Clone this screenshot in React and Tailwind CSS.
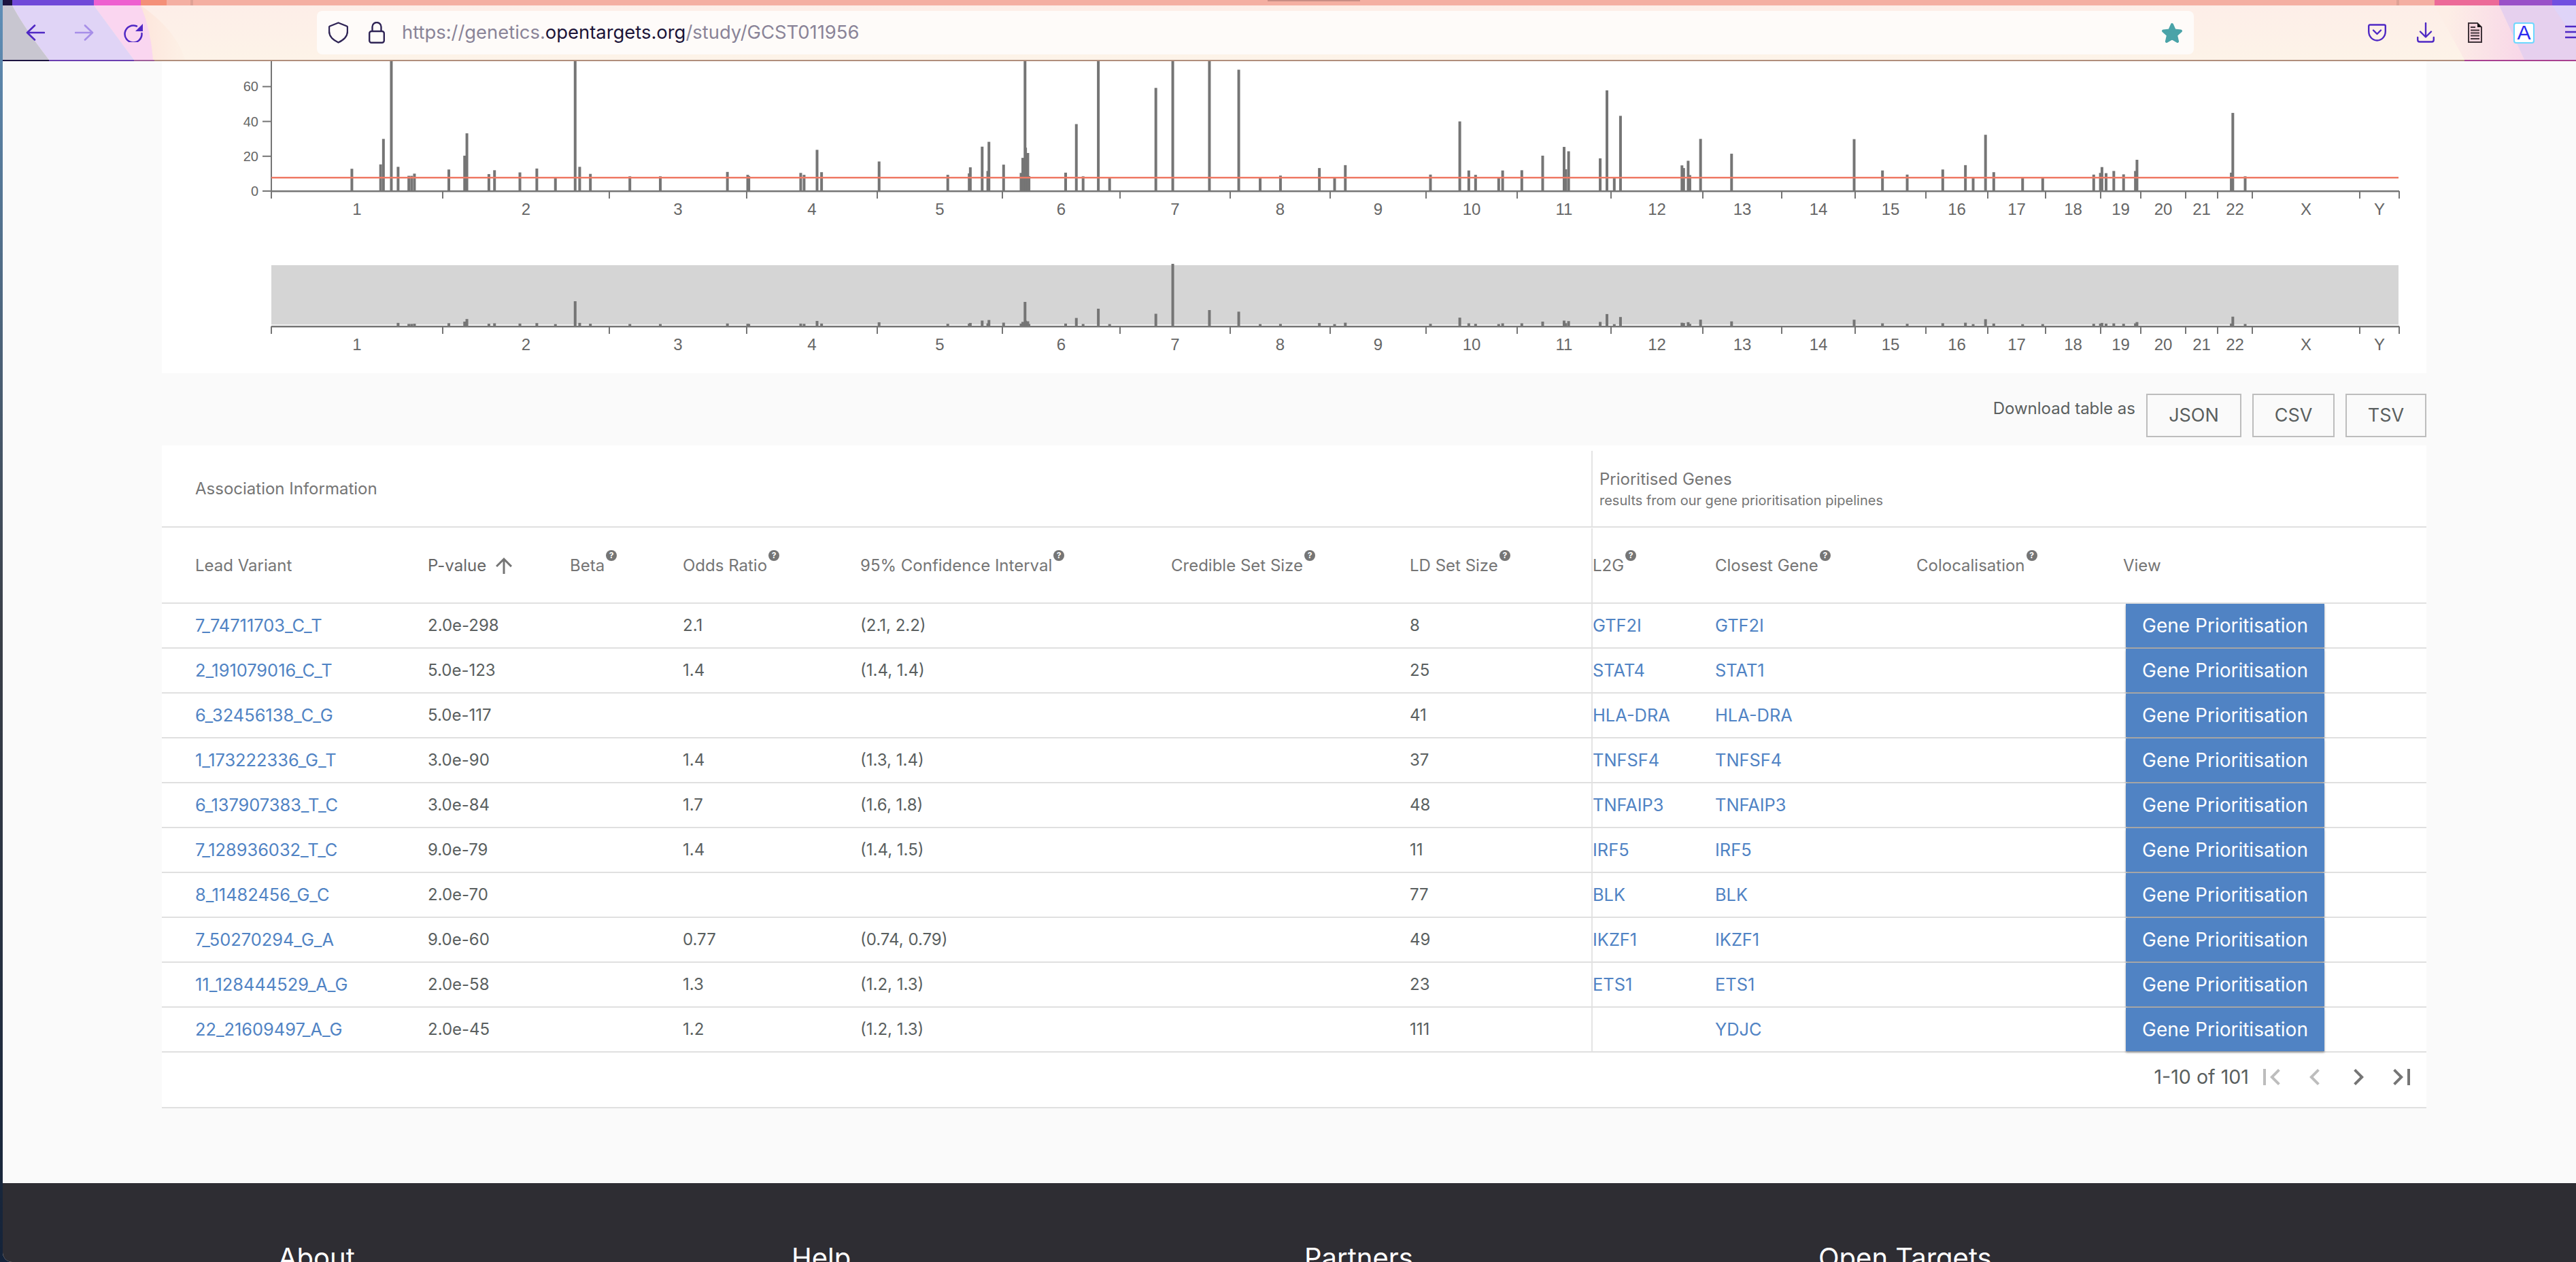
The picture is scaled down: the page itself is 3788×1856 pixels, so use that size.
import React from "react";

const z1 = [[624,695],[675,677],[680,572],[694,252],[706,687],[725,724],[730,724],[735,715],[796,698],[824,641],[828,549],[867,717],[877,701],[922,710],[952,694],[985,730],[1020,252,36],[1028,687],[1047,716],[1117,726],[1171,726],[1290,708],[1326,720],[1328,725],[1420,712],[1426,720],[1449,617],[1457,709],[1559,665]];
const z2 = [[113,720],[151,714],[153,689],[174,604],[184,704],[186,584],[212,678],[243,712],[246,650],[250,252,35],[251,608],[255,630],[257,725],[322,711],[341,511],[353,726],[380,252,25],[400,729],[482,362],[512,252,91],[577,252,23],[629,287],[667,729],[703,723],[772,692],[799,731],[818,680],[969,719],[1021,500],[1037,702],[1049,720],[1090,729],[1097,702],[1131,701],[1168,641],[1206,605],[1209,697],[1214,623],[1270,652],[1282,372],[1295,732],[1306,477],[1415,681],[1418,692],[1426,662],[1429,721],[1448,572],[1503,633]];
const z3 = [[167,573],[222,702],[270,719],[339,698],[383,680],[398,731],[422,555],[438,709],[494,732],[533,729],[632,719],[645,712],[648,688],[656,713],[671,704],[690,718],[713,704],[716,658],[899,711],[902,465],[926,726]];

const bars = [
  ...z1.map(([x, y, m], i) => ({ x: x / 1.206, top: Math.max(90, y / 2.8), m, skipMini: i < 4 })),
  ...z2.map(([x, y, m]) => ({ x: 1300 + x / 1.206, top: Math.max(90, y / 2.8), m })),
  ...z3.map(([x, y, m]) => ({ x: 2600 + x / 1.32, top: Math.max(90, y / 2.8), m })),
];

const ticks = [399,651,896,1098,1290,1474,1647,1809,1956,2097,2231,2369,2504,2620,2728,2832,2923,3008,3089,3148,3214,3261,3312,3470,3528];
const chromLabels = ["1","2","3","4","5","6","7","8","9","10","11","12","13","14","15","16","17","18","19","20","21","22","X","Y"];
const AXIS = "#757575";

function Axis({ base, tickEnd, labelY }) {
  return (
    <g>
      <rect x={399} y={base - 1} width={3129} height={2.5} fill={AXIS} />
      {ticks.map((t) => <rect key={t} x={t - 1} y={base} width={2} height={tickEnd - base} fill={AXIS} />)}
      {chromLabels.map((l, i) => (
        <text key={l} x={(ticks[i] + ticks[i + 1]) / 2} y={labelY} textAnchor="middle" dominantBaseline="central" fontSize="24" fontFamily="'Liberation Sans', sans-serif" fill="#666">{l}</text>
      ))}
    </g>
  );
}

function Chart() {
  return (
    <svg width="3330" height="459" viewBox="238 90 3330 459" className="block">
      <rect x={398} y={90} width={2} height={202} fill={AXIS} />
      {[0, 20, 40, 60].map((v) => {
        const y = 281 - v * 2.56;
        return (
          <g key={v}>
            <rect x={386} y={y - 1} width={13} height={2} fill={AXIS} />
            <text x={380} y={y} textAnchor="end" dominantBaseline="central" fontSize="20" fontFamily="'Liberation Sans', sans-serif" fill="#666">{v}</text>
          </g>
        );
      })}
      {bars.map((b, i) => <rect key={i} x={b.x - 2} y={b.top} width={4} height={281 - b.top} fill={AXIS} />)}
      <rect x={399} y={260} width={3128} height={2.5} fill="#ef7a65" />
      <Axis base={281} tickEnd={292} labelY={307} />
      <rect x={399} y={390} width={3128} height={87.5} fill="#d5d5d5" />
      {bars.filter((b) => !b.skipMini).map((b, i) => {
        const v = (281 - b.top) / 2.56;
        const h = b.m || Math.max(1.5, v * 0.296);
        return <rect key={i} x={b.x - 2} y={479 - h} width={4} height={h} fill={AXIS} />;
      })}
      <Axis base={480} tickEnd={491} labelY={506} />
    </svg>
  );
}

function ChromeBackdrop() {
  return (
    <svg className="absolute inset-0" width="3784" height="90" viewBox="4 0 3784 90">
      <defs>
        <linearGradient id="barbg" x1="0" y1="0" x2="0" y2="1">
          <stop offset="0" stopColor="#fdeee8" />
          <stop offset="1" stopColor="#fdf3e8" />
        </linearGradient>
        <linearGradient id="rpink" gradientUnits="userSpaceOnUse" x1="3600" y1="0" x2="3712" y2="0">
          <stop offset="0" stopColor="#fdeee6" />
          <stop offset="1" stopColor="#f8d6e8" />
        </linearGradient>
        <linearGradient id="lpeach" gradientUnits="userSpaceOnUse" x1="210" y1="0" x2="272" y2="0">
          <stop offset="0" stopColor="#fde6dc" />
          <stop offset="1" stopColor="#fdf1e6" />
        </linearGradient>
      </defs>
      <rect x="4" y="0" width="3784" height="8" fill="#f4afa2" />
      <rect x="4" y="0" width="14" height="8" fill="#1c1440" />
      <rect x="18" y="0" width="120" height="8" fill="#7048d8" />
      <rect x="138" y="0" width="69" height="8" fill="#ee5fd0" />
      <rect x="207" y="0" width="38" height="8" fill="#f49078" />
      <rect x="280" y="0" width="4" height="8" fill="#dfa195" />
      <rect x="1864" y="0" width="136" height="2" fill="#c98d84" />
      <rect x="3524" y="0" width="4" height="8" fill="#dfa195" />
      <rect x="3580" y="0" width="95" height="8" fill="#ec6a98" />
      <rect x="3675" y="0" width="78" height="8" fill="#9a50c8" />
      <rect x="3753" y="0" width="35" height="8" fill="#7050e0" />
      <rect x="4" y="8" width="3784" height="80" fill="url(#barbg)" />
      <path d="M207 8 Q260 45 272 88 L225 88 L207 8Z" fill="url(#lpeach)" />
      <path d="M138 8 L207 8 Q222 45 225 88 L197 88Z" fill="#fad6f0" />
      <path d="M18 8 L138 8 L197 88 L72 88Q35 40 18 8Z" fill="#e0d4f6" />
      <path d="M4 8 L18 8 Q35 40 72 88 L4 88Z" fill="#c8c6d0" />
      <path d="M3580 8 L3675 8 L3712 88 L3624 88Z" fill="url(#rpink)" />
      <path d="M3675 8 L3753 8 L3788 50 L3788 88 L3712 88Z" fill="#e6d0ee" />
      <path d="M3753 8 L3788 8 L3788 60Z" fill="#dfd4f8" />
      <rect x="4" y="88" width="3784" height="2" fill="#b08e7c" />
      <rect x="4" y="88" width="68" height="2" fill="#1c1440" />
      <rect x="72" y="88" width="125" height="2" fill="#6a3fb0" />
      <rect x="197" y="88" width="30" height="2" fill="#a0609a" />
      <rect x="3624" y="88" width="164" height="2" fill="#a84090" />
    </svg>
  );
}

const Back = () => (
  <svg width="28" height="24" viewBox="0 0 28 24" fill="none" stroke="#4f28c4" strokeWidth="2.6" strokeLinecap="round" strokeLinejoin="round"><path d="M2 12H27M13 1.5L2 12l11 10.5" /></svg>
);
const Forward = () => (
  <svg width="28" height="24" viewBox="0 0 28 24" fill="none" stroke="#a78ee8" strokeWidth="2.6" strokeLinecap="round" strokeLinejoin="round"><path d="M1 12H26M15 1.5L26 12 15 22.5" /></svg>
);
const Reload = () => (
  <svg width="28" height="28" viewBox="0 0 28 28" fill="none"><path d="M19 4.5A12.5 12.5 0 1 0 26.5 15" stroke="#4f28c4" strokeWidth="2.5" strokeLinecap="round" /><path d="M28 1V12H17Z" fill="#4f28c4" /></svg>
);
const Shield = () => (
  <svg width="29" height="32" viewBox="0 0 29 32" fill="none" stroke="#2f2455" strokeWidth="2.4" strokeLinejoin="round"><path d="M14.5 1.5L27 6.5Q28 7 28 8.5V14C28 22 22 27 14.5 30.5 7 27 1 22 1 14V8.5Q1 7 2 6.5Z" /></svg>
);
const Lock = () => (
  <svg width="24" height="32" viewBox="0 0 24 32" fill="none" stroke="#2f2455" strokeWidth="2.4"><rect x="1.2" y="14" width="21.6" height="16.8" rx="3" /><path d="M5.5 14V7.5a6.5 6.5 0 0 1 13 0V14" /></svg>
);
const Star = () => (
  <svg width="32" height="31" viewBox="0 0 32 31"><path d="M16 3l3.8 8.6 9.2.9-7 6.2 2.1 9.3L16 23.2 7.900 28l2.100-9.300-7-6.200 9.200-.9z" fill="#4aa3a8" stroke="#4aa3a8" strokeWidth="4" strokeLinejoin="round" /></svg>
);
const Pocket = () => (
  <svg width="27" height="26" viewBox="0 0 27 26" fill="none" stroke="#4f28c4" strokeWidth="2.4" strokeLinecap="round" strokeLinejoin="round"><path d="M3 1.500H24Q25.800 1.500 25.800 3.500V11C25.800 19 20 24.500 13.500 24.500 7 24.500 1.200 19 1.200 11V3.500Q1.200 1.500 3 1.500Z" /><path d="M8 9.500L13.500 15 19 9.500" /></svg>
);
const Download = () => (
  <svg width="26" height="30" viewBox="0 0 26 30" fill="none" stroke="#4f28c4" strokeWidth="2.4" strokeLinecap="round" strokeLinejoin="round"><path d="M13 1V21M5 13.500L13 21.500 21 13.500" /><path d="M1.200 22V25.500Q1.200 28.500 4 28.500H22Q24.800 28.500 24.800 25.500V22" /></svg>
);
const Doc = () => (
  <svg width="21" height="30" viewBox="0 0 21 30"><path d="M1 1H14L20 7V29H1Z" fill="#f5d3dc" stroke="#40343a" strokeWidth="2" /><path d="M14 1L20 7H14Z" fill="#111" /><path d="M4 7H11M4 11.500H17M4 15.500H17M4 19.500H17M4 24H17" stroke="#40343a" strokeWidth="2" /></svg>
);
const Burger = () => (
  <svg width="16" height="22" viewBox="0 0 16 22" fill="none" stroke="#4f28c4" strokeWidth="2.6"><path d="M0 2H16M0 10H16M0 18H16" /></svg>
);

function BrowserBar() {
  return (
    <div className="relative h-[90px] w-full shrink-0 overflow-hidden">
      <ChromeBackdrop />
      <div className="relative mt-[8px] flex h-[80px] items-center">
        <div className="ml-[34px] flex items-center"><Back /></div>
        <div className="ml-[44px] flex items-center"><Forward /></div>
        <div className="ml-[44px] flex items-center"><Reload /></div>
        <div className="ml-[256px] flex h-[64px] w-[2760px] items-center rounded-lg bg-[#fefbf9]">
          <div className="ml-[17px]"><Shield /></div>
          <div className="ml-[30px]"><Lock /></div>
          <div className="ml-[25px] text-[27.4px] whitespace-nowrap text-[#8a8498]">
            https://genetics.<span className="text-[#1c1438]">opentargets.org</span>/study/GCST011956
          </div>
          <div className="mr-[16px] ml-auto"><Star /></div>
        </div>
        <div className="ml-[256px]"><Pocket /></div>
        <div className="ml-[45px]"><Download /></div>
        <div className="ml-[49px]"><Doc /></div>
        <div className="ml-[46px] flex h-[31px] w-[31px] items-center justify-center rounded-[4px] border-2 border-[#6cd8ff] bg-white text-[30px] leading-none text-[#2a2af0] font-['Liberation_Sans',sans-serif]">A</div>
        <div className="ml-[45px]"><Burger /></div>
      </div>
    </div>
  );
}

const COLS = "grid grid-cols-[342px_209px_166px_261px_457px_351px_268px_181px_296px_304px_446px] pl-[49px]";

const Help = () => (
  <span className="mb-[30px] ml-[2px] flex h-[16px] w-[16px] shrink-0 items-center justify-center rounded-full bg-[#757575] text-[12px] leading-none font-bold text-white">?</span>
);

function Head({ label, help, border }) {
  return (
    <div className={`flex items-center ${border ? "-ml-[1px] border-l-2 border-[#e4e4e4]" : ""}`}>
      <span className="whitespace-nowrap">{label}</span>
      {help && <Help />}
    </div>
  );
}

const rows = [
  ["7_74711703_C_T","2.0e-298","","2.1","(2.1, 2.2)","","8","GTF2I","GTF2I"],
  ["2_191079016_C_T","5.0e-123","","1.4","(1.4, 1.4)","","25","STAT4","STAT1"],
  ["6_32456138_C_G","5.0e-117","","","","","41","HLA-DRA","HLA-DRA"],
  ["1_173222336_G_T","3.0e-90","","1.4","(1.3, 1.4)","","37","TNFSF4","TNFSF4"],
  ["6_137907383_T_C","3.0e-84","","1.7","(1.6, 1.8)","","48","TNFAIP3","TNFAIP3"],
  ["7_128936032_T_C","9.0e-79","","1.4","(1.4, 1.5)","","11","IRF5","IRF5"],
  ["8_11482456_G_C","2.0e-70","","","","","77","BLK","BLK"],
  ["7_50270294_G_A","9.0e-60","","0.77","(0.74, 0.79)","","49","IKZF1","IKZF1"],
  ["11_128444529_A_G","2.0e-58","","1.3","(1.2, 1.3)","","23","ETS1","ETS1"],
  ["22_21609497_A_G","2.0e-45","","1.2","(1.2, 1.3)","","111","","YDJC"],
];

function Row({ r }) {
  return (
    <div className={`${COLS} h-[66px] border-b-2 border-[#e0e0e0] text-[24px] text-[#5a5f5f]`}>
      {r.slice(0, 7).map((c, i) => (
        <div key={i} className={`flex items-center whitespace-nowrap ${i === 0 ? "text-[25.4px] text-[#5083c4]" : ""}`}>{c}</div>
      ))}
      <div className="-ml-[1px] flex items-center border-l-2 border-[#e4e4e4] text-[25.4px] text-[#5083c4]">{r[7]}</div>
      <div className="flex items-center text-[25.4px] text-[#5083c4]">{r[8]}</div>
      <div />
      <div className="pl-[4px]">
        <div className="flex h-[64px] w-[292px] items-center justify-center bg-[#5083c4] text-[28px] text-white shadow-[0_2px_3px_rgba(0,0,0,0.35)]">Gene Prioritisation</div>
      </div>
    </div>
  );
}

function PageIcon({ d, color }) {
  return <svg width="48" height="48" viewBox="0 0 24 24" fill={color}><path d={d} /></svg>;
}

function DlButton({ w, children }) {
  return <div className={`flex h-[64px] ${w} items-center justify-center border-2 border-[#bdbdbd] text-[27px] text-[#5a5f5f]`}>{children}</div>;
}

function Table() {
  return (
    <div className="w-[3330px] bg-white text-[#757575]">
      <div className="grid h-[121px] grid-cols-[2054px_1227px] border-b-2 border-[#e0e0e0] pl-[49px] text-[24px]">
        <div className="flex items-center pt-[8px]">Association Information</div>
        <div className="-ml-[1px] mt-[8px] flex flex-col border-l-2 border-[#e4e4e4] pt-[28px] pl-[10px]">
          <div className="leading-[28px]">Prioritised Genes</div>
          <div className="mt-[5px] text-[20px] leading-[24px] whitespace-nowrap">results from our gene prioritisation pipelines</div>
        </div>
      </div>
      <div className={`${COLS} h-[112px] border-b-2 border-[#e0e0e0] pt-[1px] text-[24px]`}>
        <Head label="Lead Variant" />
        <div className="flex items-center whitespace-nowrap text-[#666]">
          P-value
          <svg className="ml-[8px]" width="36" height="36" viewBox="0 0 24 24" fill="#757575"><path d="M4 12l1.41 1.41L11 7.83V20h2V7.83l5.58 5.59L20 12l-8-8-8 8z" /></svg>
        </div>
        <Head label="Beta" help />
        <Head label="Odds Ratio" help />
        <Head label="95% Confidence Interval" help />
        <Head label="Credible Set Size" help />
        <Head label="LD Set Size" help />
        <Head label="L2G" help border />
        <Head label="Closest Gene" help />
        <Head label="Colocalisation" help />
        <Head label="View" />
      </div>
      {rows.map((r) => <Row key={r[0]} r={r} />)}
      <div className="flex h-[82px] items-center justify-end gap-[16px] border-b-2 border-[#e0e0e0] pr-[12px] pb-[8px]">
        <span className="mr-[-7px] text-[28.6px] whitespace-nowrap text-[#5a5f5f]">1-10 of 101</span>
        <PageIcon color="#bdbdbd" d="M18.41 16.59L13.82 12l4.59-4.59L17 6l-6 6 6 6zM6 6h2v12H6z" />
        <PageIcon color="#bdbdbd" d="M15.41 7.41L14 6l-6 6 6 6 1.41-1.41L10.83 12z" />
        <PageIcon color="#757575" d="M10 6L8.59 7.41 13.17 12l-4.58 4.59L10 18l6-6z" />
        <PageIcon color="#757575" d="M5.59 7.41L10.18 12l-4.59 4.59L7 18l6-6-6-6zM16 6h2v12h-2z" />
      </div>
    </div>
  );
}

export default function App() {
  return (
    <div className="flex h-[1856px] w-full overflow-hidden bg-[#14233a] font-['Inter',sans-serif]">
      <div className="h-full w-[4px] shrink-0 bg-gradient-to-b from-[#5f8fb8] via-[#3a3f48] to-[#14233a]" />
      <div className="flex h-full min-w-0 flex-1 flex-col overflow-hidden rounded-bl-[14px] bg-[#fafafa]">
        <BrowserBar />
        <div className="ml-[234px] w-[3330px]">
          <div className="h-[459px] overflow-hidden bg-white"><Chart /></div>
          <div className="flex h-[106px] justify-end gap-[16px] pt-[30px]">
            <span className="h-[44px] text-[24px] leading-[44px] whitespace-nowrap text-[#5a5f5f]">Download table as</span>
            <DlButton w="w-[140px]">JSON</DlButton>
            <DlButton w="w-[121px]">CSV</DlButton>
            <DlButton w="w-[119px]">TSV</DlButton>
          </div>
          <Table />
        </div>
        <div className="mt-[110px] flex h-[116px] flex-1 bg-[#2e2d33] pt-[86px] pl-[405px] text-[40px] leading-[48px] text-white">
          <div className="w-[755px]">About</div>
          <div className="w-[754px]">Help</div>
          <div className="w-[756px]">Partners</div>
          <div>Open Targets</div>
        </div>
      </div>
    </div>
  );
}
